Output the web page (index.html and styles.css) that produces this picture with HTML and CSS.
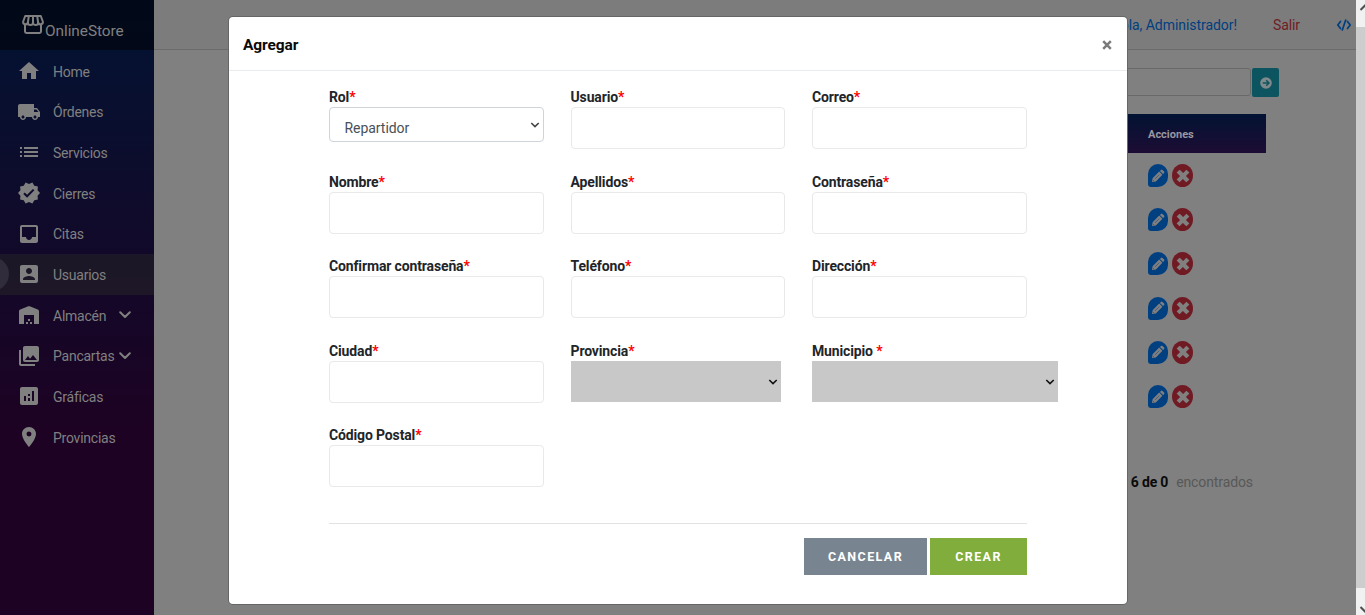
FILE: index.html
```html
<!DOCTYPE html>
<html lang="es">
<head>
<meta charset="utf-8">
<title>OnlineStore</title>
<link rel="stylesheet" href="styles.css">
</head>
<body>
<div class="page">
  <aside class="sidebar">
    <div class="brand">
      <svg class="brand-icon" viewBox="0 0 24 24"><g fill="none" stroke="currentColor" stroke-width="2" stroke-linejoin="round"><path d="M4.200 4h15.600l2 5.500a2.300 2.300 0 0 1-4.600 1 2.600 2.600 0 0 1-5.200 0 2.600 2.600 0 0 1-5.200 0 2.300 2.300 0 0 1-4.600-1z"/><path d="M4 12v7.600q0 1.400 1.400 1.400h13.200q1.400 0 1.400-1.400V12M12 4v7M7.800 4l-1 7M16.200 4l1 7"/></g></svg>
      <span class="brand-name">OnlineStore</span>
    </div>
    <nav class="nav">
      <a class="item"><svg class="icon" viewBox="0 0 24 24"><path d="M10 20v-6h4v6h5v-8h3L12 3 2 12h3v8z"/></svg><span>Home</span></a>
      <a class="item"><svg class="icon" viewBox="0 0 24 24"><path d="M20 8h-3V4H3c-1.100 0-2 .9-2 2v11h2c0 1.660 1.340 3 3 3s3-1.340 3-3h6c0 1.660 1.340 3 3 3s3-1.340 3-3h2v-5l-3-4zM6 18.500c-.83 0-1.500-.67-1.500-1.500s.67-1.500 1.500-1.500 1.500.67 1.500 1.500-.67 1.500-1.500 1.500zm13.500-9l1.960 2.500H17V9.500h2.500zm-1.500 9c-.83 0-1.500-.67-1.500-1.500s.67-1.500 1.500-1.500 1.500.67 1.500 1.500-.67 1.500-1.500 1.500z"/></svg><span>Órdenes</span></a>
      <a class="item"><svg class="icon" viewBox="0 0 24 24"><path d="M3 13h2v-2H3v2zm0 4h2v-2H3v2zm0-8h2V7H3v2zm4 4h14v-2H7v2zm0 4h14v-2H7v2zM7 7v2h14V7H7z"/></svg><span>Servicios</span></a>
      <a class="item"><svg class="icon" viewBox="0 0 24 24"><path d="M23 12l-2.440-2.790.34-3.690-3.610-.82-1.890-3.200L12 2.960 8.600 1.500 6.710 4.690 3.100 5.500l.34 3.700L1 12l2.440 2.790-.34 3.700 3.610.82L8.600 22.500l3.400-1.470 3.400 1.460 1.890-3.190 3.610-.82-.34-3.690L23 12zm-12.910 4.720l-3.800-3.810 1.480-1.480 2.320 2.330 5.850-5.870 1.480 1.480-7.330 7.350z"/></svg><span>Cierres</span></a>
      <a class="item"><svg class="icon" viewBox="0 0 24 24"><path d="M19 3H4.990c-1.110 0-1.980.89-1.980 2L3 19c0 1.100.88 2 1.990 2H19c1.100 0 2-.9 2-2V5c0-1.110-.9-2-2-2zm0 12h-4c0 1.660-1.350 3-3 3s-3-1.340-3-3H4.990V5H19v10z"/></svg><span>Citas</span></a>
      <a class="item active"><svg class="icon" viewBox="0 0 24 24"><path d="M3 5v14c0 1.100.89 2 2 2h14c1.100 0 2-.9 2-2V5c0-1.100-.9-2-2-2H5c-1.110 0-2 .9-2 2zm12 4c0 1.660-1.340 3-3 3s-3-1.340-3-3 1.340-3 3-3 3 1.340 3 3zm-9 8c0-2 4-3.100 6-3.100s6 1.100 6 3.100v1H6v-1z"/></svg><span>Usuarios</span></a>
      <a class="item"><svg class="icon" viewBox="0 0 24 24"><path d="M2 21V8.350c0-.82.5-1.550 1.260-1.860l8-3.200q.74-.28 1.480 0l8 3.200C21.500 6.800 22 7.530 22 8.350V21h-5v-9H7v9zM9 19h2v2H9zM11 16h2v2h-2zM13 19h2v2h-2z"/></svg><span class="group">Almacén</span><svg class="caret" viewBox="0 0 12 8"><path d="M1.200 1.200 6 6l4.800-4.800"/></svg></a>
      <a class="item"><svg class="icon" viewBox="0 0 24 24"><path d="M22 16V4c0-1.100-.9-2-2-2H8c-1.100 0-2 .9-2 2v12c0 1.100.9 2 2 2h12c1.100 0 2-.9 2-2zm-11-4l2.030 2.710L16 11l4 5H8l3-4zM2 6v14c0 1.100.9 2 2 2h14v-2H4V6H2z"/></svg><span class="group">Pancartas</span><svg class="caret" viewBox="0 0 12 8"><path d="M1.200 1.200 6 6l4.800-4.800"/></svg></a>
      <a class="item"><svg class="icon" viewBox="0 0 24 24"><path fill-rule="evenodd" d="M19 3H5c-1.100 0-2 .9-2 2v14c0 1.100.9 2 2 2h14c1.100 0 2-.9 2-2V5c0-1.100-.9-2-2-2zM9 17H7v-5h2zm4 0h-2v-3h2zm0-5h-2v-2h2zm4 5h-2V7h2z"/></svg><span>Gráficas</span></a>
      <a class="item"><svg class="icon" viewBox="0 0 24 24"><path fill-rule="evenodd" d="M12 2C8.130 2 5 5.130 5 9c0 5.250 7 13 7 13s7-7.750 7-13c0-3.870-3.130-7-7-7zM12 11.500a2.500 2.500 0 0 1 0-5 2.500 2.500 0 0 1 0 5z"/></svg><span>Provincias</span></a>
    </nav>
  </aside>
  <main class="main">
    <header class="topbar">
      <a class="hello">¡Hola, Administrador!</a><a class="logout">Salir</a>
      <svg class="code" viewBox="0 0 16 12"><path d="M4.500 2.500 1.800 6l2.700 3.500M11.500 2.500l2.700 3.500-2.700 3.500M9.700 1 6.300 11"/></svg>
    </header>
    <div class="search"><div class="search-box"></div><div class="search-btn"><svg viewBox="0 0 12 12"><circle cx="6" cy="6" r="5.800" fill="#808a8c"/><path d="M2.700 6h6M6.200 3.200 9 6 6.200 8.800" fill="none" stroke="#0d555f" stroke-width="1.500"/></svg></div></div>
    <div class="table">
      <div class="thead">Acciones</div>
      <div class="row"><i class="edit"><svg viewBox="0 0 14 14"><use href="#pencil"/></svg></i><i class="del"><svg viewBox="0 0 14 14"><use href="#cross"/></svg></i></div>
      <div class="row"><i class="edit"><svg viewBox="0 0 14 14"><use href="#pencil"/></svg></i><i class="del"><svg viewBox="0 0 14 14"><use href="#cross"/></svg></i></div>
      <div class="row"><i class="edit"><svg viewBox="0 0 14 14"><use href="#pencil"/></svg></i><i class="del"><svg viewBox="0 0 14 14"><use href="#cross"/></svg></i></div>
      <div class="row"><i class="edit"><svg viewBox="0 0 14 14"><use href="#pencil"/></svg></i><i class="del"><svg viewBox="0 0 14 14"><use href="#cross"/></svg></i></div>
      <div class="row"><i class="edit"><svg viewBox="0 0 14 14"><use href="#pencil"/></svg></i><i class="del"><svg viewBox="0 0 14 14"><use href="#cross"/></svg></i></div>
      <div class="row"><i class="edit"><svg viewBox="0 0 14 14"><use href="#pencil"/></svg></i><i class="del"><svg viewBox="0 0 14 14"><use href="#cross"/></svg></i></div>
    </div>
    <div class="count"><b>6 de 0</b><span>encontrados</span></div>
  </main>
  <div class="scrollbar">
    <div class="sb-end"><svg viewBox="0 0 9 27"><path d="M4.500 10 10 4.500"/></svg></div>
    <div class="sb-thumb"></div>
    <div class="sb-end"><svg viewBox="0 0 9 27"><path d="M4.500 19 10 24.500"/></svg></div>
  </div>
</div>

<section class="modal">
  <header class="modal-head"><h5>Agregar</h5><svg class="close" viewBox="0 0 10 10"><path d="M1.200 1.200 8.800 8.800M8.800 1.200 1.200 8.800"/></svg></header>
  <div class="form">
    <div class="field"><label>Rol<em>*</em></label><div class="select"><span>Repartidor</span><svg class="chev" viewBox="0 0 10 6"><path d="M1.300 1 5 4.600 8.700 1"/></svg></div></div>
    <div class="field"><label>Usuario<em>*</em></label><div class="input"></div></div>
    <div class="field"><label>Correo<em>*</em></label><div class="input"></div></div>
    <div class="field"><label>Nombre<em>*</em></label><div class="input"></div></div>
    <div class="field"><label>Apellidos<em>*</em></label><div class="input"></div></div>
    <div class="field"><label>Contraseña<em>*</em></label><div class="input"></div></div>
    <div class="field"><label>Confirmar contraseña<em>*</em></label><div class="input"></div></div>
    <div class="field"><label>Teléfono<em>*</em></label><div class="input"></div></div>
    <div class="field"><label>Dirección<em>*</em></label><div class="input"></div></div>
    <div class="field"><label>Ciudad<em>*</em></label><div class="input"></div></div>
    <div class="field"><label>Provincia<em>*</em></label><div class="gray"><svg class="chev" viewBox="0 0 10 6"><path d="M1.300 1 5 4.600 8.700 1"/></svg></div></div>
    <div class="field"><label>Municipio <em>*</em></label><div class="gray wide"><svg class="chev" viewBox="0 0 10 6"><path d="M1.300 1 5 4.600 8.700 1"/></svg></div></div>
    <div class="field"><label>Código Postal<em>*</em></label><div class="input"></div></div>
  </div>
  <footer class="actions"><button class="cancel">CANCELAR</button><button class="create">CREAR</button></footer>
</section>

<svg class="defs">
  <g id="pencil"><path fill="#808080" d="M1 13l.6-3.800 6.600-6.600 3.200 3.200-6.600 6.600zM8.900 1.900 10 .9q.7-.6 1.400 0l1.700 1.700q.6.700 0 1.400l-1 1.100z"/><path d="M4 9.900 8.300 5.600M2 11l1 1" stroke="#003f80" stroke-width=".5"/></g>
  <g id="cross"><path d="M3.600 3.600l6.800 6.800M10.400 3.600l-6.800 6.800" stroke="#808080" stroke-width="4.200" stroke-linecap="square" fill="none"/></g>
</svg>
</body>
</html>
```
FILE: styles.css
```css
* { box-sizing: border-box; }
body { margin: 0; width: 1365px; height: 615px; overflow: hidden; font-family: Roboto, "Open Sans", sans-serif; font-size: 14px; background: #808080; color: #212529; }
svg { display: block; flex: none; }
.defs { position: absolute; width: 0; height: 0; }
.page { display: flex; height: 615px; }

.sidebar { width: 154px; flex: none; overflow: hidden; color: #808080; background: linear-gradient(180deg, #021333 0%, #1d0223 70%); }
.brand { height: 50px; background: rgba(0,0,0,.5); display: flex; padding: 12px 0 0 21px; }
.brand-icon { width: 24px; height: 24px; }
.brand-name { font-size: 15.400px; line-height: 20px; padding-top: 9px; letter-spacing: -.05px; }
.nav { padding-top: .5px; }
.item { height: 40.700px; display: flex; align-items: center; padding-left: 17px; position: relative; }
.icon { width: 24px; height: 24px; margin-right: 12px; fill: currentColor; }
.item span { letter-spacing: -.24px; padding-top: 1.500px; }
.item .group { width: 66px; }
.caret { width: 12px; height: 8px; fill: none; stroke: currentColor; stroke-width: 2; stroke-linecap: round; stroke-linejoin: round; }
.active { background: rgba(37,37,37,.5); }
.active::before { content: ""; position: absolute; left: -25px; top: 3px; width: 34px; height: 34px; border-radius: 50%; background: #302c3b; }

.main { flex: 1; display: flex; flex-direction: column; align-items: stretch; }
.topbar { height: 50px; background: #7c7c7c; border-bottom: 1px solid #6b6b6b; display: flex; justify-content: flex-end; align-items: center; padding-right: 4px; }
.hello { color: #003f80; margin-right: 36px; letter-spacing: -.05px; }
.logout { color: #701c24; margin-right: 36px; letter-spacing: -.1px; }
.code { width: 16px; height: 12px; fill: none; stroke: #003f80; stroke-width: 1.700; stroke-linecap: round; stroke-linejoin: round; }
.search { display: flex; justify-content: flex-end; margin: 18px 77px 0 0; height: 29px; }
.search-box { width: 300px; height: 28px; border: 1px solid #696969; border-radius: 3px; }
.search-btn { width: 27px; height: 29px; margin-left: 1px; background: #0c545f; border-radius: 2px; display: flex; align-items: center; justify-content: center; }
.search-btn svg { width: 12px; height: 12px; }
.table { margin: 17px 90px 0 0; align-self: flex-end; width: 300px; }
.thead { height: 39px; padding-left: 182px; line-height: 41px; font-size: 11px; font-weight: 700; color: #9a969f; background: linear-gradient(#021333, #1d0c34); }
.row { height: 44.200px; padding: 1px 0 0 182px; display: flex; gap: 4px; align-items: center; }
.edit, .del { width: 20px; height: 23px; display: flex; align-items: center; justify-content: center; background: #003f80; border-radius: 10px 10px 10px 3px; }
.del { width: 21px; background: #701a24; border-radius: 50%; }
.edit svg, .del svg { width: 14px; height: 14px; }
.count { margin: 52px 103px 0 0; display: flex; justify-content: flex-end; line-height: 24px; color: #585858; letter-spacing: -.1px; }
.count b { color: #0a0a0a; margin-right: 8px; letter-spacing: -.2px; }

.scrollbar { width: 9px; display: flex; flex-direction: column; background: #cdcdcd; }
.sb-end { height: 27px; background: #f1f1f1; overflow: hidden; }
.sb-end svg { width: 9px; height: 27px; fill: none; stroke: #505050; stroke-width: 2; }
.sb-thumb { flex: 1; }

.modal { position: absolute; left: 229px; top: 17px; width: 898px; height: 587px; background: #fff; border-radius: 4px; box-shadow: 0 0 0 1px #666; }
.modal-head { height: 54px; border-bottom: 1px solid #e9ecef; display: flex; justify-content: space-between; align-items: center; padding: 2px 15.500px 0 14px; }
h5 { margin: 0; font-size: 15.500px; font-weight: 700; color: #0a0a0a; letter-spacing: -.1px; }
.close { width: 10px; height: 10px; fill: none; stroke: #7a7a7a; stroke-width: 2.500; }
.form { margin: 16px 0 0 100px; display: grid; grid-template-columns: 241.500px 241.500px 246px; grid-auto-rows: 84.600px; }
label { display: block; height: 20px; line-height: 21px; font-weight: 700; letter-spacing: -.14px; font-size: 14px; }
em { color: red; font-style: normal; }
.input { width: 214.500px; height: 42px; border: 1px solid #e9e9e9; border-radius: 4px; }
.select { width: 215px; height: 35px; border: 1px solid #ced4da; border-radius: 4px; display: flex; justify-content: space-between; padding: 0 3px 0 14.500px; color: #495057; }
.select span { padding-top: 12px; line-height: 16px; letter-spacing: -.05px; }
.chev { width: 10px; height: 6px; fill: none; stroke: #111; stroke-width: 1.600; }
.select .chev { margin-top: 14px; stroke: #444; }
.gray { width: 210px; height: 41px; background: #c8c8c8; display: flex; justify-content: flex-end; align-items: center; padding: 1px 3px 0 0; }
.wide { width: 246px; }
.actions { margin: 13px 100px 0; border-top: 1px solid #e2e2e2; padding-top: 14px; display: flex; justify-content: flex-end; gap: 3px; }
button { border: 0; padding: 1px 0 0; height: 37px; font: 700 12.500px Roboto, sans-serif; letter-spacing: 1.400px; color: #fff; }
.cancel { width: 123px; background: #788590; }
.create { width: 97px; background: #80ad3b; }
```
